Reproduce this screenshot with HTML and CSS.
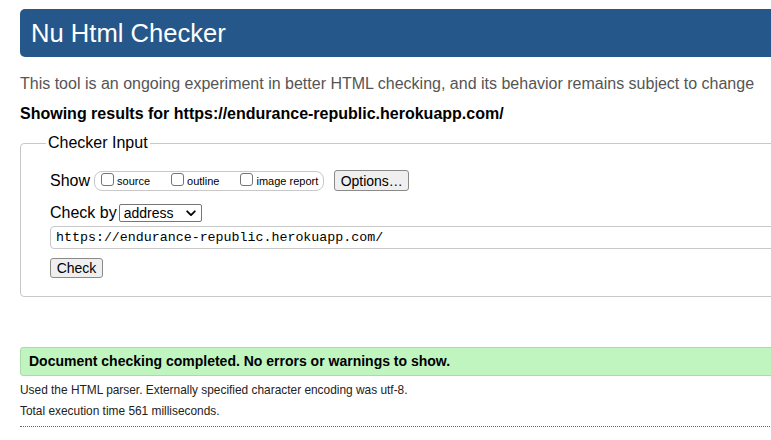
FILE: index.html
```html
<!DOCTYPE html>
<html lang="en">
<head>
<meta charset="utf-8">
<title>Nu Html Checker</title>
<link rel="stylesheet" href="styles.css">
</head>
<body>
<div class="page">
  <h1 class="title">Nu Html Checker</h1>
  <p class="intro">This tool is an ongoing experiment in better HTML checking, and its behavior remains subject to change</p>
  <p class="showing">Showing results for https://endurance-republic.herokuapp.com/</p>
  <fieldset class="checker">
    <legend class="legend">Checker Input</legend>
    <div class="row show-row">
      <span class="row-label">Show</span>
      <span class="opts">
        <label class="opt"><span class="box"></span>source</label>
        <label class="opt"><span class="box"></span>outline</label>
        <label class="opt"><span class="box"></span>image report</label>
      </span>
      <button class="btn options-btn" type="button">Options…</button>
    </div>
    <div class="row by-row">
      <span class="row-label">Check by</span>
      <span class="select">address<svg class="chev" width="10" height="7" viewBox="0 0 10 7"><path d="M1.2 1.3 L5 5.1 L8.8 1.3" fill="none" stroke="#000" stroke-width="1.8" stroke-linecap="round" stroke-linejoin="round"/></svg></span>
    </div>
    <div class="url">https://endurance-republic.herokuapp.com/</div>
    <button class="btn check-btn" type="button">Check</button>
  </fieldset>
  <p class="success">Document checking completed. No errors or warnings to show.</p>
  <p class="meta">Used the HTML parser. Externally specified character encoding was utf-8.</p>
  <p class="meta">Total execution time 561 milliseconds.</p>
  <hr class="dotted">
</div>
</body>
</html>
```
FILE: styles.css
```css
html, body {
  margin: 0;
  padding: 0;
  overflow: hidden;
  background: #fff;
}
body {
  font-family: "Liberation Sans", Arial, sans-serif;
  color: #000;
  padding: 9px 0 0 20px;
}
.page {
  width: 800px;
}
.title {
  margin: 0;
  height: 48px;
  box-sizing: border-box;
  background: #25578a;
  color: #fff;
  border-radius: 5px;
  font-size: 25.6px;
  font-weight: normal;
  line-height: 48px;
  padding-left: 11px;
}
.intro {
  margin: 17px 0 0;
  font-size: 16px;
  line-height: 20px;
  color: #555;
}
.showing {
  margin: 10px 0 0;
  font-size: 16px;
  line-height: 20px;
  font-weight: bold;
}
.checker {
  margin: 10px 0 0;
  border: 1px solid #c8c8c8;
  border-radius: 4px;
  padding: 8px 0 18px 29px;
  min-inline-size: 0;
}
.legend {
  font-size: 16px;
  padding: 0 2px;
  margin-left: -4px;
  line-height: 18px;
}
.row {
  display: flex;
  align-items: center;
}
.row-label {
  font-size: 16px;
}
.show-row {
  height: 21px;
  margin-top: 10px;
}
.opts {
  display: flex;
  align-items: center;
  margin-left: 4px;
  height: 18px;
  border: 1px solid #c8c8c8;
  border-radius: 8px;
  padding: 0 5px 0 6px;
}
.opt {
  display: flex;
  align-items: center;
  font-size: 11px;
  margin-right: 21px;
}
.opt:last-child {
  margin-right: 0;
}
.box {
  width: 11px;
  height: 11px;
  border: 1px solid #757575;
  border-radius: 3px;
  margin-right: 3px;
  margin-top: -2px;
}
.btn {
  font-family: "Liberation Sans", Arial, sans-serif;
  background: #efefef;
  border: 1px solid #8a8a8a;
  border-radius: 3px;
  color: #000;
  padding: 0;
  margin: 0;
}
.options-btn {
  margin-left: 10px;
  width: 75px;
  height: 21px;
  font-size: 14px;
}
.by-row {
  margin-top: 13px;
  height: 18px;
}
.select {
  display: flex;
  align-items: center;
  justify-content: space-between;
  box-sizing: border-box;
  margin-left: 2px;
  width: 83px;
  height: 18px;
  border: 1px solid #767676;
  border-radius: 2px;
  font-size: 14px;
  padding: 0 5px 0 4px;
}
.url {
  margin-top: 4px;
  height: 23px;
  box-sizing: border-box;
  border: 1px solid #c8c8c8;
  border-radius: 4px;
  font-family: "Liberation Mono", "DejaVu Sans Mono", monospace;
  font-size: 13.3px;
  line-height: 21px;
  padding-left: 5px;
}
.check-btn {
  display: block;
  margin-top: 9px;
  width: 53px;
  height: 20px;
  font-size: 14px;
}
.success {
  margin: 50px 0 0;
  height: 29px;
  box-sizing: border-box;
  background: #c0f5c0;
  border: 1px solid #a9dca9;
  border-radius: 3px;
  font-size: 14px;
  font-weight: bold;
  line-height: 27px;
  padding-left: 8px;
}
.meta {
  margin: 7px 0 0;
  font-size: 11.9px;
  line-height: 14px;
  color: #222;
}
.dotted {
  margin: 8px 0 0;
  border: 0;
  border-top: 1px dotted #666;
  height: 0;
}
```
